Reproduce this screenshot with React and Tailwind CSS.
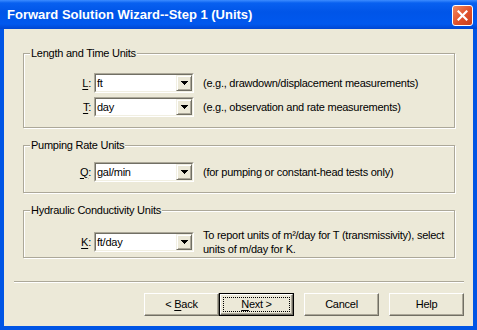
import React from "react";

/* ================== UI ================== */
function Mn({ children }) {
  return <span className="underline underline-offset-[2px]">{children}</span>;
}

function Arrow() {
  return (
    <svg width="7" height="4" viewBox="0 0 7 4" shapeRendering="crispEdges">
      <path d="M0 0h7v1H0z M1 1h5v1H1z M2 2h3v1H2z M3 3h1v1H3z" fill="#000" />
    </svg>
  );
}

function Combo({ value }) {
  return (
    <div className="w-[100px] h-[20px] border border-t-[#ACA899] border-l-[#ACA899] border-r-white border-b-white">
      <div className="h-full flex bg-white border border-t-[#716F64] border-l-[#716F64] border-r-[#F1EFE2] border-b-[#F1EFE2]">
        <span className="flex-1 pl-[1px] leading-[16px]">{value}</span>
        <div className="w-[16px] h-full flex items-center justify-center bg-[#ECE9D8] border border-t-[#F1EFE2] border-l-[#F1EFE2] border-r-[#716F64] border-b-[#716F64] shadow-[inset_1px_1px_0_#fff,inset_-1px_-1px_0_#ACA899]">
          <Arrow />
        </div>
      </div>
    </div>
  );
}

function Row({ label, value, children }) {
  return (
    <div className="flex items-center">
      <div className="w-[67px] text-right leading-[13px]">{label}</div>
      <div className="ml-[3px]">
        <Combo value={value} />
      </div>
      <div className="ml-[9px] leading-[14px] whitespace-nowrap">{children}</div>
    </div>
  );
}

function Group({ title, className = "", children }) {
  return (
    <div
      className={`relative border border-[#ACA899] shadow-[inset_1px_1px_0_#fff,1px_1px_0_#fff] ${className}`}
    >
      <span className="absolute left-[6px] top-[-7px] px-[1px] bg-[#ECE9D8] leading-[13px] whitespace-nowrap">
        {title}
      </span>
      {children}
    </div>
  );
}

function Button({ children, def = false }) {
  if (def) {
    return (
      <div className="w-[75px] h-[23px] border border-black">
        <div className="h-full border border-t-white border-l-white border-r-[#716F64] border-b-[#716F64] shadow-[inset_-1px_-1px_0_#ACA899] p-[2px]">
          <div className="w-full h-full flex items-center justify-center border border-dotted border-black leading-[13px]">
            <span>{children}</span>
          </div>
        </div>
      </div>
    );
  }
  return (
    <div className="w-[75px] h-[23px] flex items-center justify-center border border-t-white border-l-white border-r-[#716F64] border-b-[#716F64] shadow-[inset_-1px_-1px_0_#ACA899] leading-[13px]">
      <span>{children}</span>
    </div>
  );
}

function CloseButton() {
  return (
    <div className="mt-[5px] mr-[4px] ml-auto w-[21px] h-[21px] rounded-[3px] border border-white bg-[linear-gradient(135deg,#F08A60,#E0502A_55%,#C8401F)] flex items-center justify-center">
      <svg width="11" height="11" viewBox="0 0 11 11">
        <path d="M1.5 1.5L9.5 9.5M9.5 1.5L1.5 9.5" stroke="#fff" strokeWidth="2.2" strokeLinecap="square" />
      </svg>
    </div>
  );
}

/* ================== APP ================== */
export default function App() {
  return (
    <div className="w-[477px] h-[330px] flex flex-col bg-[#0055E5] text-[11px] tracking-[-0.25px] text-black font-['Liberation_Sans',Arial,sans-serif]">
      {/* title bar */}
      <div className="h-[29px] flex bg-[linear-gradient(to_bottom,#3C8CFF_0px,#0860F0_3px,#0055E8_12px,#0058EE_24px,#0046D2_29px)]">
        <span className="mt-[7px] ml-[7px] font-bold text-[13px] leading-[16px] tracking-normal text-white">
          Forward Solution Wizard--Step 1 (Units)
        </span>
        <CloseButton />
      </div>

      {/* body */}
      <div className="flex-1 mx-[4px] mb-[4px] bg-[#ECE9D8] flex flex-col">
        <div className="ml-[19px] mr-[18px] mt-[24px] flex flex-col">
          <Group title="Length and Time Units" className="h-[75px] pt-[19px]">
            <div className="flex flex-col gap-[4px]">
              <Row label={<><Mn>L</Mn>:</>} value="ft">
                (e.g., drawdown/displacement measurements)
              </Row>
              <Row label={<><Mn>T</Mn>:</>} value="day">
                (e.g., observation and rate measurements)
              </Row>
            </div>
          </Group>

          <Group title="Pumping Rate Units" className="h-[48px] mt-[17px] pt-[16px]">
            <Row label={<><Mn>Q</Mn>:</>} value="gal/min">
              (for pumping or constant-head tests only)
            </Row>
          </Group>

          <Group title="Hydraulic Conductivity Units" className="h-[48px] mt-[17px] pt-[17px]">
            <Row label={<><Mn>K</Mn>:</>} value="ft/day">
              To report units of m²/day for T (transmissivity), select
              <br />
              units of m/day for K.
            </Row>
          </Group>
        </div>

        {/* separator */}
        <div className="ml-[10px] mr-[9px] mt-[23px] h-[2px] border-t border-t-[#ACA899] border-b border-b-white" />

        {/* buttons */}
        <div className="mt-[10px] mr-[9px] flex justify-end">
          <Button>
            &lt; <Mn>B</Mn>ack
          </Button>
          <Button def>
            <Mn>N</Mn>ext &gt;
          </Button>
          <div className="ml-[10px]">
            <Button>Cancel</Button>
          </div>
          <div className="ml-[10px]">
            <Button>Help</Button>
          </div>
        </div>
      </div>
    </div>
  );
}
